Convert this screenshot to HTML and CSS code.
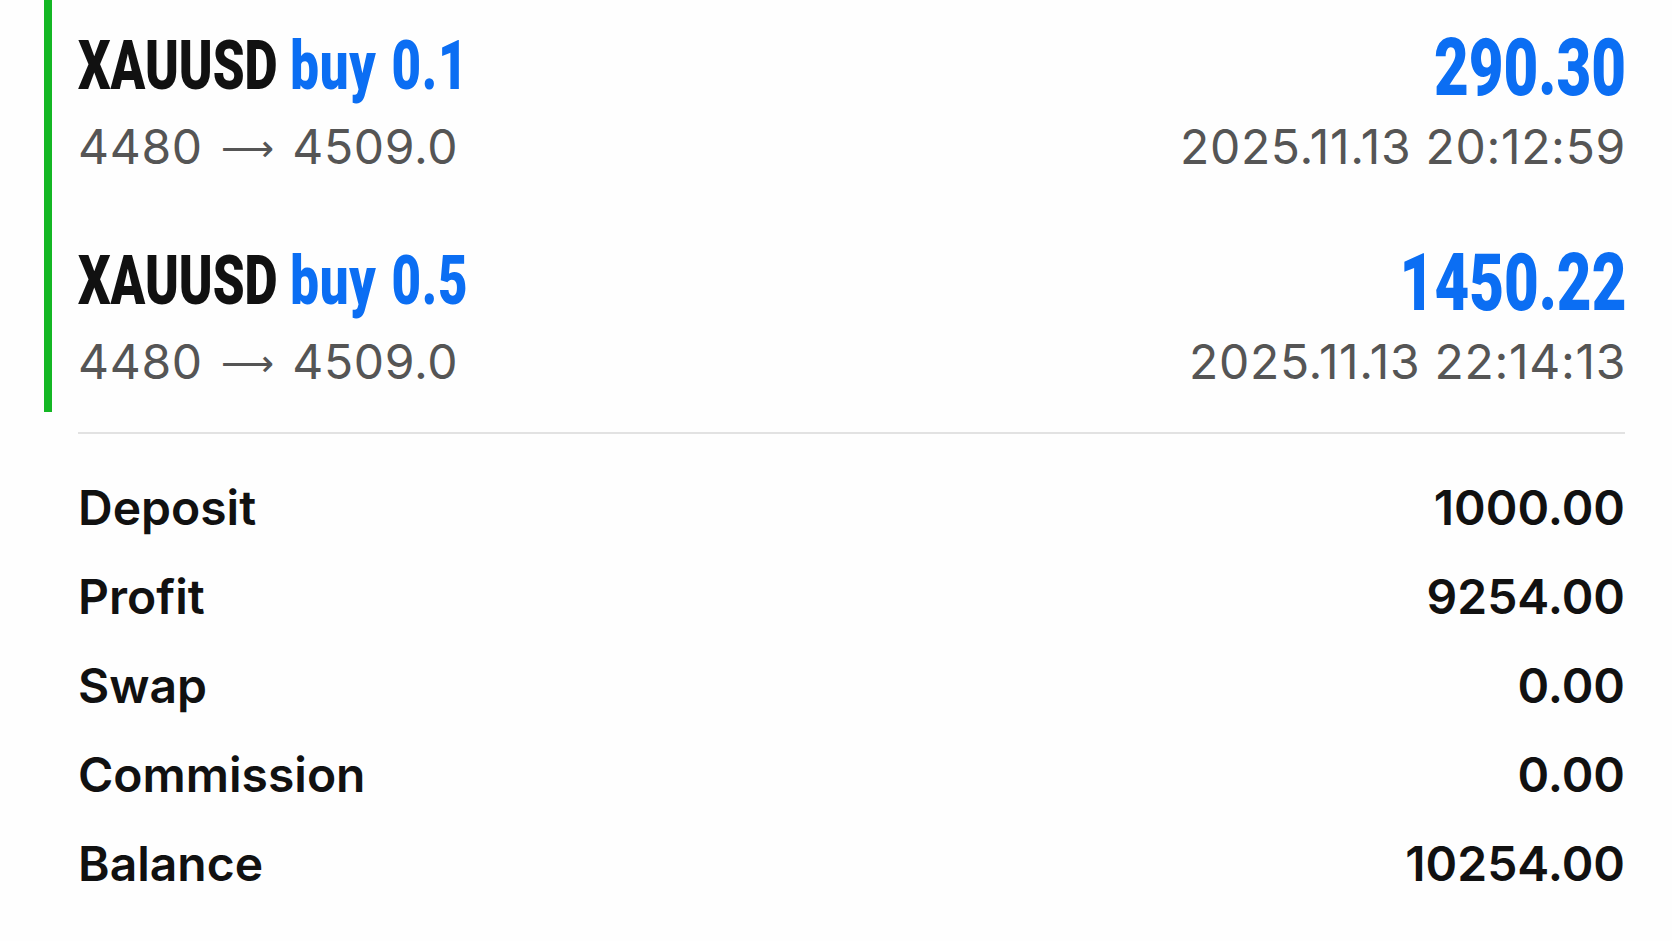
FILE: index.html
```html
<!DOCTYPE html>
<html lang="en">
<head>
  <meta charset="UTF-8">
  <title>History</title>
  <link rel="stylesheet" href="styles.css">
</head>
<body>

  <div class="trades">
    <div class="trade">
      <div class="trade-head">
        <div class="symbol"><span class="cond">XAUUSD <span class="side">buy 0.1</span></span></div>
        <div class="profit"><span class="cond">290.30</span></div>
      </div>
      <div class="trade-sub">
        <div class="prices">4480 <span class="arrow">⟶</span> 4509.0</div>
        <div class="time">2025.11.13 20:12:59</div>
      </div>
    </div>

    <div class="trade">
      <div class="trade-head">
        <div class="symbol"><span class="cond">XAUUSD <span class="side">buy 0.5</span></span></div>
        <div class="profit"><span class="cond">1450.22</span></div>
      </div>
      <div class="trade-sub">
        <div class="prices">4480 <span class="arrow">⟶</span> 4509.0</div>
        <div class="time">2025.11.13 22:14:13</div>
      </div>
    </div>
  </div>

  <div class="divider"></div>

  <div class="summary">
    <div class="sum-row"><span>Deposit</span><span>1000.00</span></div>
    <div class="sum-row"><span>Profit</span><span>9254.00</span></div>
    <div class="sum-row"><span>Swap</span><span>0.00</span></div>
    <div class="sum-row"><span>Commission</span><span>0.00</span></div>
    <div class="sum-row"><span>Balance</span><span>10254.00</span></div>
  </div>

</body>
</html>
```

FILE: styles.css
```css
body {
  margin: 0;
  background: #fefefe;
  font-family: Roboto, "Liberation Sans", sans-serif;
  color: #111;
}

.trades {
  margin-left: 44px;
  border-left: 8px solid #14b724;
}

.trade {
  padding: 20px 46px 36px 26px;
}

.trade:last-child {
  padding-bottom: 18px;
}

.trade-head {
  display: flex;
  justify-content: space-between;
  align-items: flex-start;
  font-weight: 900;
}

.symbol {
  font-size: 68px;
  line-height: 93px;
  color: #111;
  white-space: nowrap;
}

.side {
  color: #0b6ef3;
  word-spacing: 2px;
}

.profit {
  font-size: 80px;
  line-height: 97px;
  color: #0b6ef3;
}

.cond {
  display: inline-block;
  transform: scaleX(0.75);
  transform-origin: left bottom;
}

.symbol .side {
  letter-spacing: 1px;
}

.profit .cond {
  transform: scaleX(0.75);
  transform-origin: right bottom;
}

.trade-sub {
  display: flex;
  justify-content: space-between;
  font-family: Inter, Roboto, sans-serif;
  font-size: 48px;
  letter-spacing: 0.7px;
  line-height: 60px;
  color: #555;
}

.arrow {
  font-family: "DejaVu Sans", sans-serif;
  font-size: 37px;
  letter-spacing: 0;
  vertical-align: 3px;
  margin: 0 4px;
}

.divider {
  height: 2px;
  background: #e2e2e2;
  margin: 20px 47px 0 78px;
}

.summary {
  margin-top: 29px;
  padding: 0 47px 0 78px;
  font-family: Inter, Roboto, sans-serif;
  font-size: 48px;
  font-weight: 600;
  line-height: 89px;
  color: #111;
}

.sum-row {
  display: flex;
  justify-content: space-between;
}
```
